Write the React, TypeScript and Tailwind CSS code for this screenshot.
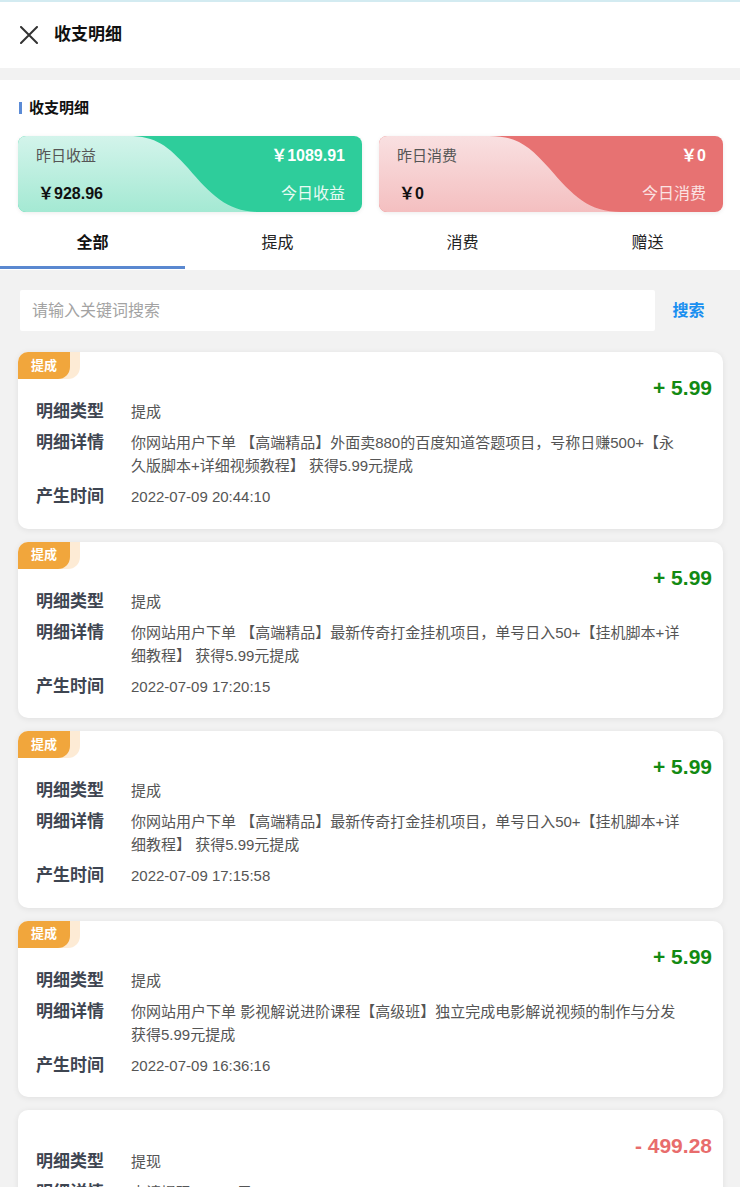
type Record = {
  badge?: string
  amount: string
  income: boolean
  type: string
  detail: string[]
  time: string
}

const records: Record[] = [
  {
    badge: '提成',
    amount: '+ 5.99',
    income: true,
    type: '提成',
    detail: [
      '你网站用户下单 【高端精品】外面卖880的百度知道答题项目，号称日赚500+【永',
      '久版脚本+详细视频教程】 获得5.99元提成',
    ],
    time: '2022-07-09 20:44:10',
  },
  {
    badge: '提成',
    amount: '+ 5.99',
    income: true,
    type: '提成',
    detail: [
      '你网站用户下单 【高端精品】最新传奇打金挂机项目，单号日入50+【挂机脚本+详',
      '细教程】 获得5.99元提成',
    ],
    time: '2022-07-09 17:20:15',
  },
  {
    badge: '提成',
    amount: '+ 5.99',
    income: true,
    type: '提成',
    detail: [
      '你网站用户下单 【高端精品】最新传奇打金挂机项目，单号日入50+【挂机脚本+详',
      '细教程】 获得5.99元提成',
    ],
    time: '2022-07-09 17:15:58',
  },
  {
    badge: '提成',
    amount: '+ 5.99',
    income: true,
    type: '提成',
    detail: [
      '你网站用户下单 影视解说进阶课程【高级班】独立完成电影解说视频的制作与分发',
      '获得5.99元提成',
    ],
    time: '2022-07-09 16:36:16',
  },
  {
    amount: '- 499.28',
    income: false,
    type: '提现',
    detail: ['申请提现499.28元'],
    time: '2022-07-08 10:12:36',
  },
]

const tabs = ['全部', '提成', '消费', '赠送']

function StatCard({
  light1,
  light2,
  base,
  leftLabel,
  leftValue,
  rightValue,
  rightLabel,
  rightLabelColor,
}: {
  light1: string
  light2: string
  base: string
  leftLabel: string
  leftValue: string
  rightValue: string
  rightLabel: string
  rightLabelColor: string
}) {
  const id = 'g' + base.replace('#', '')
  return (
    <div className="relative flex-1 h-[76px] rounded-[8px] overflow-hidden shadow-[0_1px_4px_rgba(0,0,0,0.08)]">
      {/* 背景の曲線 */}
      <svg
        className="absolute inset-0 w-full h-full"
        viewBox="0 0 344 76"
        preserveAspectRatio="none"
      >
        <defs>
          <linearGradient id={id} x1="0" y1="0" x2="0" y2="1">
            <stop offset="0" stopColor={light1} />
            <stop offset="1" stopColor={light2} />
          </linearGradient>
        </defs>
        <rect width="344" height="76" fill={base} />
        <path
          d="M0 0 H110 C138 0 150 10 170 32 C194 60 210 76 242 76 H0 Z"
          fill={`url(#${id})`}
        />
      </svg>
      <div className="relative flex flex-col gap-[16px] pt-[9px] pl-[18px] pr-[17px]">
        <div className="flex items-center justify-between leading-[22px]">
          <span className="text-[15px] text-[#555]">{leftLabel}</span>
          <span className="text-[16px] font-bold text-white">{rightValue}</span>
        </div>
        <div className="flex items-center justify-between leading-[22px]">
          <span className="pl-[2px] text-[16px] font-bold text-[#111]">{leftValue}</span>
          <span className={`text-[16px] ${rightLabelColor}`}>{rightLabel}</span>
        </div>
      </div>
    </div>
  )
}

function RecordCard({ r }: { r: Record }) {
  return (
    <div className="relative bg-white rounded-[10px] shadow-[0_1px_6px_rgba(0,0,0,0.08)] pt-6 pb-[20.5px] pl-[18px] pr-[11px]">
      {r.badge && (
        <div className="absolute top-0 left-0 w-[62px] h-[27px] bg-[#fdebd5] rounded-tl-[10px] rounded-br-[12px]">
          <div className="w-[52px] h-[27px] bg-[#f1a63c] rounded-tl-[10px] rounded-br-[12px] flex items-center justify-center text-[13px] font-bold text-white">
            {r.badge}
          </div>
        </div>
      )}
      <div className={`flex justify-end ${r.badge ? 'h-6' : 'h-4'}`}>
        <span
          className={`text-[21px] font-bold leading-6 ${
            r.income ? 'text-[#128a12]' : 'text-[#e86c6c]'
          }`}
        >
          {r.amount}
        </span>
      </div>
      <div className="flex flex-col gap-2">
        <div className="flex">
          <span className="w-[95px] shrink-0 text-[17px] font-bold leading-[23px] text-[#3e4551]">
            明细类型
          </span>
          <span className="text-[15px] leading-[23px] text-[#555]">{r.type}</span>
        </div>
        <div className="flex">
          <span className="w-[95px] shrink-0 text-[17px] font-bold leading-[23px] text-[#3e4551]">
            明细详情
          </span>
          <div className="text-[15px] leading-[23px] text-[#555] whitespace-nowrap">
            {r.detail.map((line, i) => (
              <div key={i}>{line}</div>
            ))}
          </div>
        </div>
        <div className="flex">
          <span className="w-[95px] shrink-0 text-[17px] font-bold leading-[23px] text-[#3e4551]">
            产生时间
          </span>
          <span className="text-[15px] leading-[23px] text-[#555]">{r.time}</span>
        </div>
      </div>
    </div>
  )
}

export default function App() {
  return (
    <div className="min-h-screen bg-[#f2f2f2] font-['Liberation_Sans','Noto_Sans_CJK_SC',sans-serif]">
      {/* ヘッダー */}
      <div className="bg-white border-t-2 border-[#d3ebf1] h-[68px] flex items-center pl-[20px]">
        <svg className="w-[18px] h-[18px]" viewBox="0 0 18 18" fill="none">
          <path d="M1 1 L17 17 M17 1 L1 17" stroke="#333" strokeWidth="2" strokeLinecap="round" />
        </svg>
        <span className="ml-[16px] text-[17px] font-bold text-[#111]">收支明细</span>
      </div>

      {/* 統計セクション */}
      <div className="mt-3 bg-white">
        <div className="pt-[18px] pl-[19px] flex items-center leading-5">
          <span className="w-[3px] h-[12px] bg-[#5b8bd6]" />
          <span className="ml-[7px] text-[15px] font-bold text-[#111]">收支明细</span>
        </div>
        <div className="mt-[18px] pl-[18px] pr-[17px] flex gap-[17px]">
          <StatCard
            light1="#d3f4eb"
            light2="#a4e9d3"
            base="#2ecd9b"
            leftLabel="昨日收益"
            leftValue="￥928.96"
            rightValue="￥1089.91"
            rightLabel="今日收益"
            rightLabelColor="text-[#e9fbf4]"
          />
          <StatCard
            light1="#f9e0e1"
            light2="#f4bfc0"
            base="#e77272"
            leftLabel="昨日消费"
            leftValue="￥0"
            rightValue="￥0"
            rightLabel="今日消费"
            rightLabelColor="text-[#fbe3e3]"
          />
        </div>
        <div className="mt-[6px] grid grid-cols-4">
          {tabs.map((t, i) => (
            <div key={t} className="relative h-[52px] flex justify-center pt-[14px]">
              <span
                className={`text-[16px] leading-[22px] ${
                  i === 0 ? 'font-bold text-[#111]' : 'text-[#222]'
                }`}
              >
                {t}
              </span>
              {i === 0 && (
                <span className="absolute left-0 right-0 bottom-[1px] h-[3px] bg-[#5a88d0]" />
              )}
            </div>
          ))}
        </div>
      </div>

      {/* 検索 */}
      <div className="pt-5 pl-5 pr-[18px] flex items-center">
        <div className="flex-1 h-[41px] bg-white rounded-[2px] flex items-center pl-3">
          <span className="text-[16px] text-[#a3a3a3]">请输入关键词搜索</span>
        </div>
        <span className="w-[67px] text-center text-[16px] font-bold text-[#1a8ff0]">搜索</span>
      </div>

      {/* 明細リスト */}
      <div className="mt-[21px] pl-[18px] pr-[17px] pb-5 flex flex-col gap-[13px]">
        {records.map((r, i) => (
          <RecordCard key={i} r={r} />
        ))}
      </div>
    </div>
  )
}
